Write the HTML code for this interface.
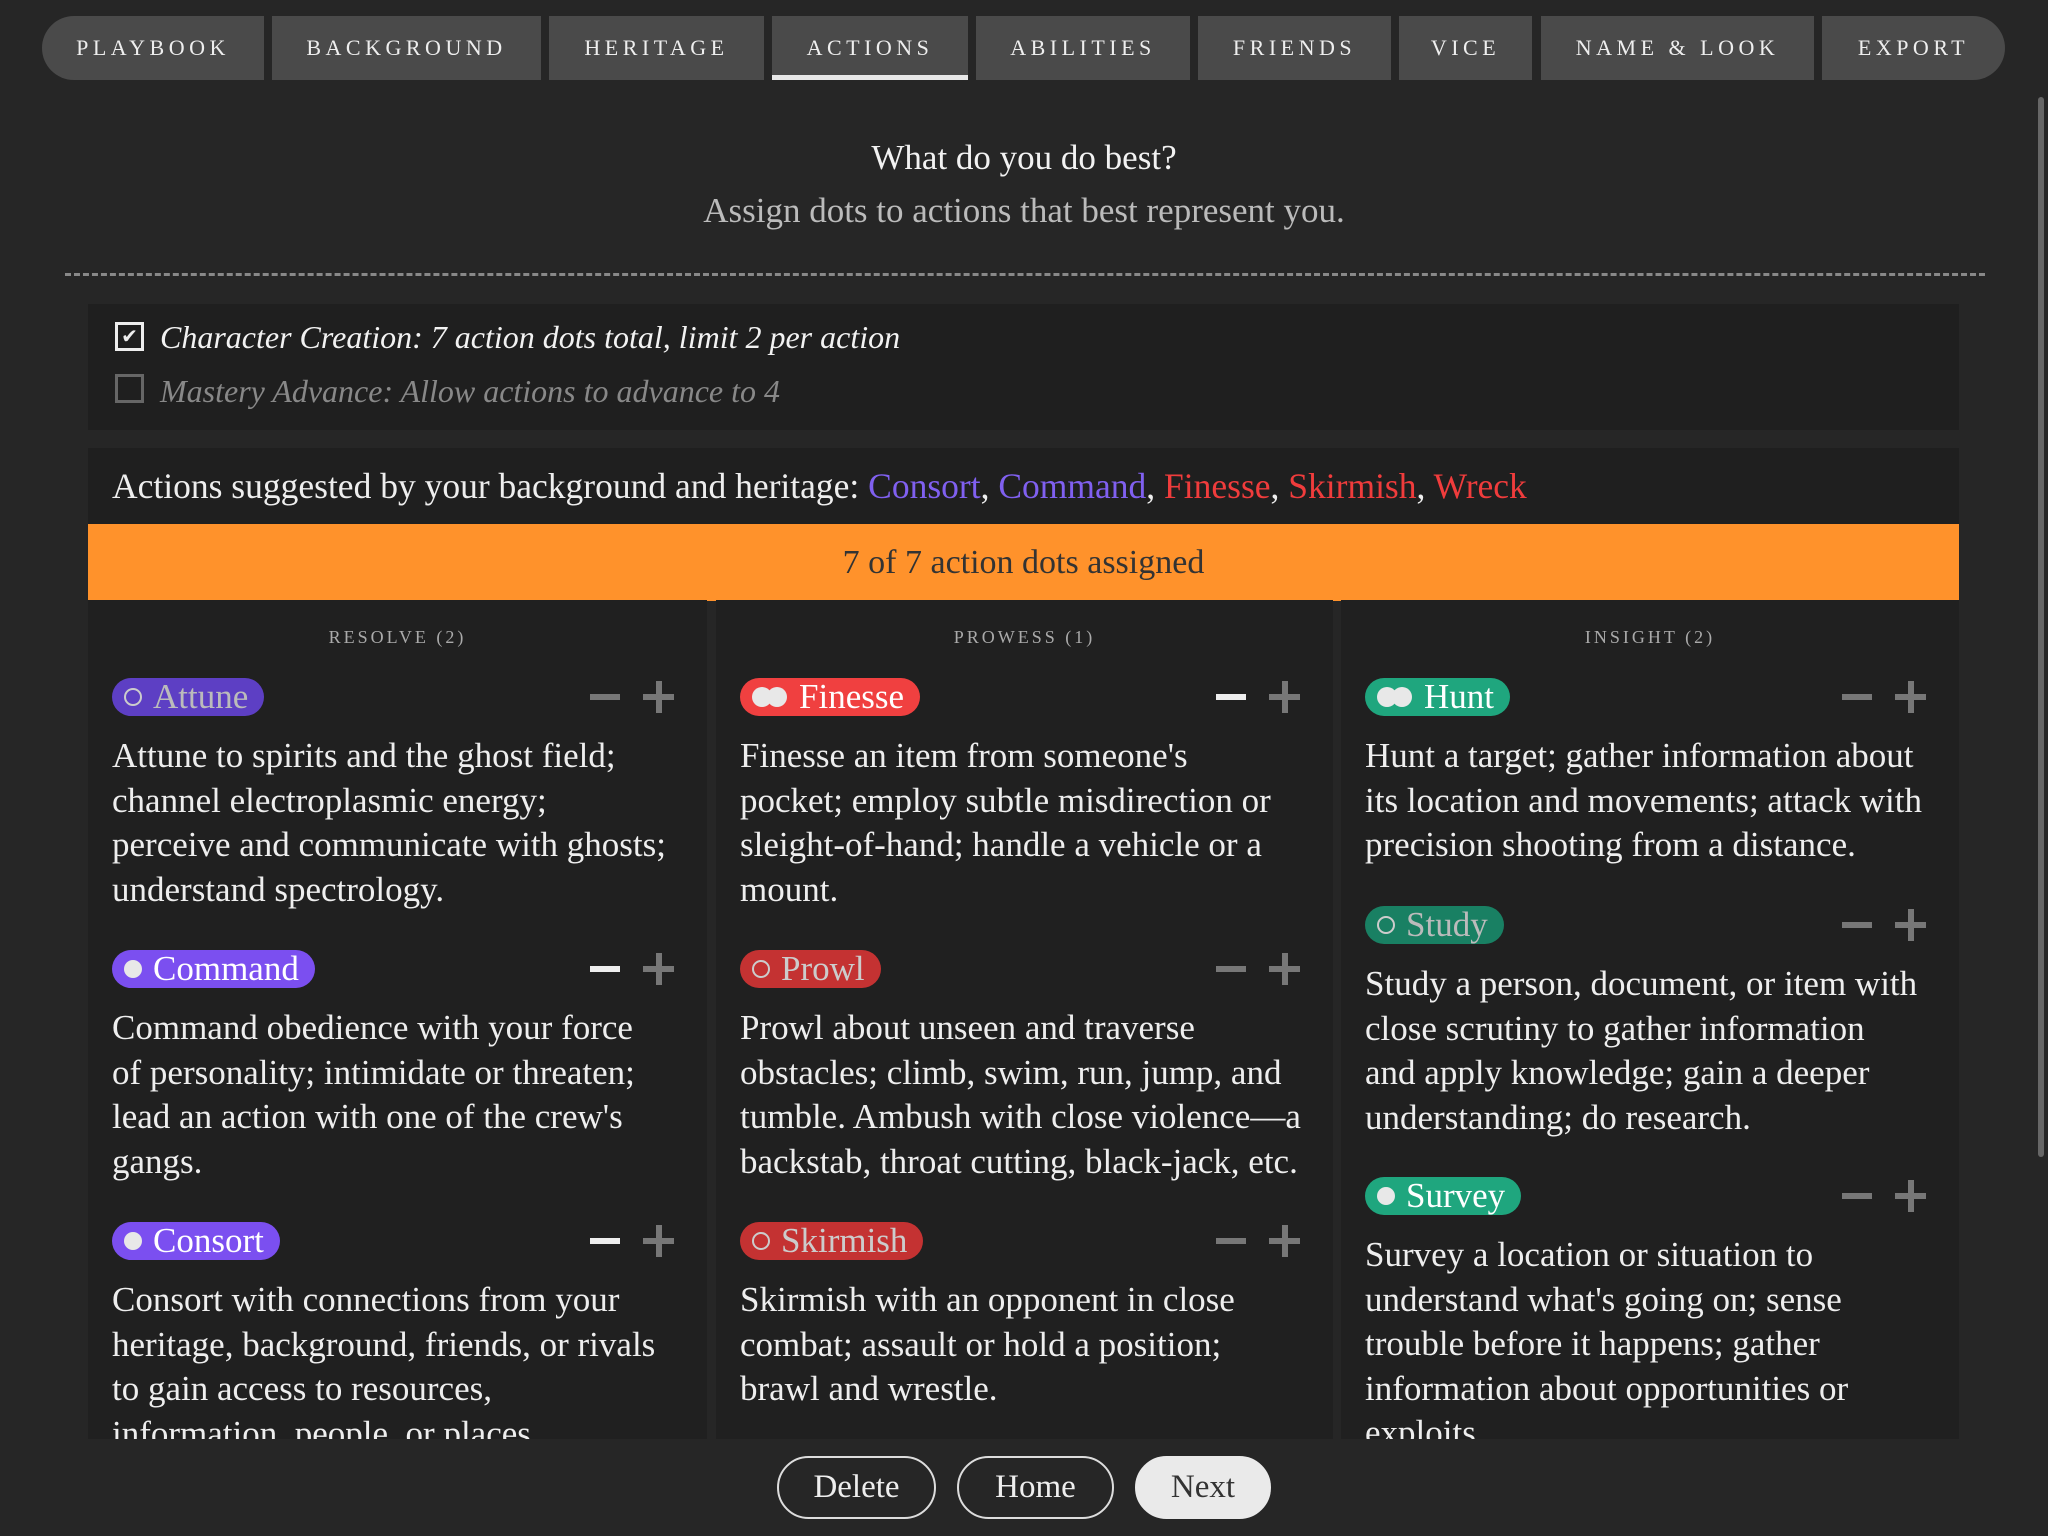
<!DOCTYPE html>
<html><head><meta charset="utf-8"><style>
*{box-sizing:border-box;margin:0;padding:0}
body{width:2048px;height:1536px;background:#262626;font-family:"Liberation Serif",serif;color:#eee;position:relative;overflow:hidden}
.abs{position:absolute}
.tab{position:absolute;top:16px;height:64px;background:#4a4a4a;color:#eee;font-size:22px;letter-spacing:4.5px;display:flex;align-items:center;justify-content:center;white-space:nowrap}
.tab.act{box-shadow:inset 0 -5px 0 #e8e8e8}
.panel{position:absolute;background:#1f1f1f}
.col{position:absolute;top:600px;height:839px;background:#202020;overflow:hidden}
.hdr{position:absolute;top:27px;width:100%;text-align:center;font-size:18px;letter-spacing:3px;color:#aaa}
.tag{position:absolute;left:24px;height:38px;border-radius:19px;padding:0 16px 0 12px;display:flex;align-items:center;font-size:35px;white-space:nowrap}
.dot{display:inline-block;width:18px;height:18px;border-radius:50%;background:#e8e8e8;margin-right:11px}
.ring{display:inline-block;width:18px;height:18px;border-radius:50%;border:2.5px solid #ccc;margin-right:11px}
.dd{display:inline-block;width:36px;height:20px;position:relative;margin-right:11px}
.dd i{position:absolute;top:0;width:20px;height:20px;border-radius:50%;background:#e8e8e8}
.pm{position:absolute;right:33px;width:84px;height:38px}
.pm .m{position:absolute;left:0;top:16px;width:30px;height:6px;background:#777}
.pm .m.on{background:#eee}
.pm .p1{position:absolute;right:0;top:16px;width:31px;height:6px;background:#777}
.pm .p2{position:absolute;right:12.5px;top:3px;width:6px;height:32px;background:#777}
.desc{position:absolute;left:24px;font-size:35px;line-height:44.5px;color:#eee;white-space:nowrap}
.btn{position:absolute;top:1456px;height:63px;border:2px solid #ddd;border-radius:32px;font-size:33px;display:flex;align-items:center;justify-content:center;color:#eee}
</style></head><body>

<div class="tab" style="left:42px;width:222px;border-radius:32px 0 0 32px">PLAYBOOK</div>
<div class="tab" style="left:272px;width:269px">BACKGROUND</div>
<div class="tab" style="left:549px;width:215px">HERITAGE</div>
<div class="tab act" style="left:772px;width:196px">ACTIONS</div>
<div class="tab" style="left:976px;width:214px">ABILITIES</div>
<div class="tab" style="left:1198px;width:193px">FRIENDS</div>
<div class="tab" style="left:1399px;width:133px">VICE</div>
<div class="tab" style="left:1541px;width:273px">NAME &amp; LOOK</div>
<div class="tab" style="left:1822px;width:183px;border-radius:0 32px 32px 0">EXPORT</div>

<div class="abs" style="left:2038px;top:97px;width:6px;height:1060px;background:#666;border-radius:3px"></div>

<div class="abs" style="top:138px;width:2048px;text-align:center;font-size:35px;color:#f2f2f2">What do you do best?</div>
<div class="abs" style="top:191px;width:2048px;text-align:center;font-size:35px;color:#bbb">Assign dots to actions that best represent you.</div>
<div class="abs" style="left:65px;top:273px;width:1920px;border-top:3px dashed #888"></div>

<div class="panel" style="left:88px;top:304px;width:1871px;height:126px"></div>
<div class="abs" style="left:115px;top:322px;width:29px;height:29px;border:3px solid #eee;color:#eee;font-size:20px;line-height:22px;text-align:center;font-family:'DejaVu Sans',sans-serif">✔</div>
<div class="abs" style="left:160px;top:319px;font-size:32px;font-style:italic;color:#f2f2f2;white-space:nowrap">Character Creation: 7 action dots total, limit 2 per action</div>
<div class="abs" style="left:115px;top:374px;width:29px;height:29px;border:3px solid #666"></div>
<div class="abs" style="left:160px;top:373px;font-size:32px;font-style:italic;color:#888;white-space:nowrap">Mastery Advance: Allow actions to advance to 4</div>

<div class="panel" style="left:88px;top:448px;width:1871px;height:80px"></div>
<div class="abs" style="left:112px;top:465px;font-size:35.5px;color:#eee;white-space:nowrap">Actions suggested by your background and heritage: <span style="color:#8060f0">Consort</span>, <span style="color:#8060f0">Command</span>, <span style="color:#f03c3c">Finesse</span>, <span style="color:#f03c3c">Skirmish</span>, <span style="color:#f03c3c">Wreck</span></div>
<div class="abs" style="left:88px;top:524px;width:1871px;height:77px;background:#ff922b;color:#333;font-size:34px;text-align:center;line-height:77px">7 of 7 action dots assigned</div>

<!-- RESOLVE -->
<div class="col" style="left:88px;width:619px">
<div class="hdr">RESOLVE (2)</div>
<div class="tag" style="top:78px;background:#5d3fc4;color:#bbb"><span class="ring"></span>Attune</div>
<div class="pm" style="top:78px"><div class="m"></div><div class="p1"></div><div class="p2"></div></div>
<div class="desc" style="top:134px">Attune to spirits and the ghost field;<br>channel electroplasmic energy;<br>perceive and communicate with ghosts;<br>understand spectrology.</div>
<div class="tag" style="top:350px;background:#7b4ff0;color:#fff"><span class="dot"></span>Command</div>
<div class="pm" style="top:350px"><div class="m on"></div><div class="p1"></div><div class="p2"></div></div>
<div class="desc" style="top:406px">Command obedience with your force<br>of personality; intimidate or threaten;<br>lead an action with one of the crew's<br>gangs.</div>
<div class="tag" style="top:622px;background:#7b4ff0;color:#fff"><span class="dot"></span>Consort</div>
<div class="pm" style="top:622px"><div class="m on"></div><div class="p1"></div><div class="p2"></div></div>
<div class="desc" style="top:678px">Consort with connections from your<br>heritage, background, friends, or rivals<br>to gain access to resources,<br>information, people, or places.</div>
</div>

<!-- PROWESS -->
<div class="col" style="left:716px;width:617px">
<div class="hdr">PROWESS (1)</div>
<div class="tag" style="top:78px;background:#f04040;color:#fff"><span class="dd"><i style="left:0"></i><i style="left:15px"></i></span>Finesse</div>
<div class="pm" style="top:78px"><div class="m on"></div><div class="p1"></div><div class="p2"></div></div>
<div class="desc" style="top:134px">Finesse an item from someone's<br>pocket; employ subtle misdirection or<br>sleight-of-hand; handle a vehicle or a<br>mount.</div>
<div class="tag" style="top:350px;background:#c43232;color:#ccc"><span class="ring"></span>Prowl</div>
<div class="pm" style="top:350px"><div class="m"></div><div class="p1"></div><div class="p2"></div></div>
<div class="desc" style="top:406px">Prowl about unseen and traverse<br>obstacles; climb, swim, run, jump, and<br>tumble. Ambush with close violence—a<br>backstab, throat cutting, black-jack, etc.</div>
<div class="tag" style="top:622px;background:#c43232;color:#ccc"><span class="ring"></span>Skirmish</div>
<div class="pm" style="top:622px"><div class="m"></div><div class="p1"></div><div class="p2"></div></div>
<div class="desc" style="top:678px">Skirmish with an opponent in close<br>combat; assault or hold a position;<br>brawl and wrestle.</div>
</div>

<!-- INSIGHT -->
<div class="col" style="left:1341px;width:618px">
<div class="hdr">INSIGHT (2)</div>
<div class="tag" style="top:78px;background:#1fa67e;color:#fff"><span class="dd"><i style="left:0"></i><i style="left:15px"></i></span>Hunt</div>
<div class="pm" style="top:78px"><div class="m"></div><div class="p1"></div><div class="p2"></div></div>
<div class="desc" style="top:134px">Hunt a target; gather information about<br>its location and movements; attack with<br>precision shooting from a distance.</div>
<div class="tag" style="top:306px;background:#198063;color:#bbb"><span class="ring"></span>Study</div>
<div class="pm" style="top:306px"><div class="m"></div><div class="p1"></div><div class="p2"></div></div>
<div class="desc" style="top:362px">Study a person, document, or item with<br>close scrutiny to gather information<br>and apply knowledge; gain a deeper<br>understanding; do research.</div>
<div class="tag" style="top:577px;background:#1fa67e;color:#fff"><span class="dot"></span>Survey</div>
<div class="pm" style="top:577px"><div class="m"></div><div class="p1"></div><div class="p2"></div></div>
<div class="desc" style="top:633px">Survey a location or situation to<br>understand what's going on; sense<br>trouble before it happens; gather<br>information about opportunities or<br>exploits.</div>
</div>

<div class="btn" style="left:777px;width:159px">Delete</div>
<div class="btn" style="left:957px;width:157px">Home</div>
<div class="btn" style="left:1135px;width:136px;background:#eaeaea;border-color:#eaeaea;color:#333">Next</div>
</body></html>
